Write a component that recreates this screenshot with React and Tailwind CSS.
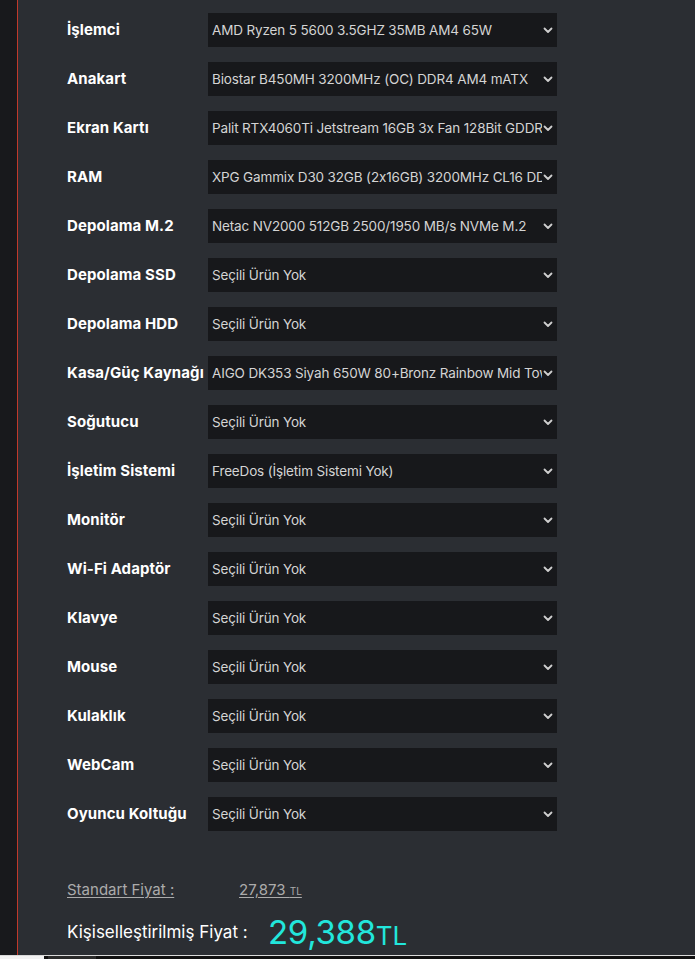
import React from "react";

const rows = [
  ["İşlemci", "AMD Ryzen 5 5600 3.5GHZ 35MB AM4 65W"],
  ["Anakart", "Biostar B450MH 3200MHz (OC) DDR4 AM4 mATX"],
  ["Ekran Kartı", "Palit RTX4060Ti Jetstream 16GB 3x Fan 128Bit GDDR6"],
  ["RAM", "XPG Gammix D30 32GB (2x16GB) 3200MHz CL16 DDR4"],
  ["Depolama M.2", "Netac NV2000 512GB 2500/1950 MB/s NVMe M.2"],
  ["Depolama SSD", "Seçili Ürün Yok"],
  ["Depolama HDD", "Seçili Ürün Yok"],
  ["Kasa/Güç Kaynağı", "AIGO DK353 Siyah 650W 80+Bronz Rainbow Mid Tower"],
  ["Soğutucu", "Seçili Ürün Yok"],
  ["İşletim Sistemi", "FreeDos (İşletim Sistemi Yok)"],
  ["Monitör", "Seçili Ürün Yok"],
  ["Wi-Fi Adaptör", "Seçili Ürün Yok"],
  ["Klavye", "Seçili Ürün Yok"],
  ["Mouse", "Seçili Ürün Yok"],
  ["Kulaklık", "Seçili Ürün Yok"],
  ["WebCam", "Seçili Ürün Yok"],
  ["Oyuncu Koltuğu", "Seçili Ürün Yok"],
];

function Chevron() {
  return (
    <svg width="10" height="7" viewBox="0 0 10 7" className="shrink-0">
      <path d="M1.5 1.5 L5 5 L8.5 1.5" fill="none" stroke="#cfcfcf" strokeWidth="1.8" strokeLinecap="round" strokeLinejoin="round" />
    </svg>
  );
}

function PartRow({ label, value }) {
  return (
    <div className="flex h-[34px] items-center">
      <div className="w-[141px] text-[15px] font-bold tracking-[0.1px] text-white">{label}</div>
      <div className="flex h-[34px] w-[349px] items-center bg-[#17181b] pl-[4px] pr-[4px]">
        <div className="mr-[1px] flex-1 overflow-hidden whitespace-nowrap text-[13.5px] tracking-[-0.15px] text-[#d4d4d4]">
          {value}
        </div>
        <Chevron />
      </div>
    </div>
  );
}

export default function App() {
  return (
    <div className="h-[959px] w-[695px] overflow-hidden bg-[#2b2e33] font-['Inter','Liberation_Sans',sans-serif] [font-feature-settings:'calt'_0]">
      <div className="flex h-[955px]">
        <div className="w-[17px] shrink-0 bg-[#18191c]" />
        <div className="w-px shrink-0 bg-[#c0392b]" />
        <div className="flex flex-1 flex-col pl-[49px] pt-[13px]">
          <div className="flex flex-col gap-[15px]">
            {rows.map(([l, v]) => (
              <PartRow key={l} label={l} value={v} />
            ))}
          </div>
          <div className="mt-[48px] flex items-center text-[15px] text-[#ababab]">
            <span className="w-[172px] underline underline-offset-2">Standart Fiyat :</span>
            <span className="underline underline-offset-2">
              27,873 <span className="text-[10px]">TL</span>
            </span>
          </div>
          <div className="mt-[14px] flex items-end">
            <span className="mb-[3px] w-[201px] text-[17px] text-white">Kişiselleştirilmiş Fiyat :</span>
            <span className="text-[33px] leading-none tracking-[-0.3px] text-[#22e6dc]">29,388</span>
            <span className="text-[26px] leading-none text-[#22e6dc]">TL</span>
          </div>
        </div>
      </div>
      <div className="h-px bg-[#d9d9d9]" />
      <div className="flex h-[3px]">
        <div className="w-[44px] bg-[#f2f2f2]" />
        <div className="w-[4px] bg-[#111]" />
        <div className="w-[48px] bg-[#2b2b2b]" />
        <div className="flex-1 bg-[#111]" />
      </div>
    </div>
  );
}
